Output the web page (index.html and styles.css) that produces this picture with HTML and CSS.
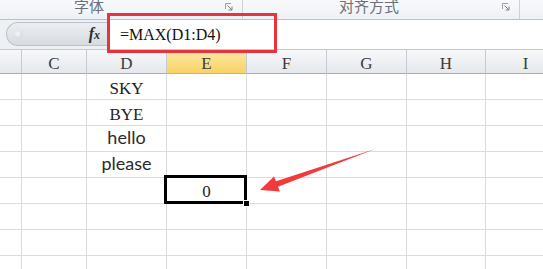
FILE: index.html
```html
<!DOCTYPE html>
<html>
<head>
<meta charset="UTF-8">
<title>MAX</title>
<link rel="stylesheet" href="styles.css">
</head>
<body>
  <div class="app">
    <div class="ribbon">
      <div class="group g1">
        <span class="glabel">字体</span>
        <svg class="launcher" width="8" height="8" viewBox="0 0 8 8"><path d="M0.5 6V0.5H6" fill="none" stroke="#9aa1aa"/><path d="M2.5 2.5L7 7M7 3.5V7H3.5" fill="none" stroke="#7b828c"/></svg>
      </div>
      <div class="group g2">
        <span class="glabel">对齐方式</span>
        <svg class="launcher" width="8" height="8" viewBox="0 0 8 8"><path d="M0.5 6V0.5H6" fill="none" stroke="#9aa1aa"/><path d="M2.5 2.5L7 7M7 3.5V7H3.5" fill="none" stroke="#7b828c"/></svg>
      </div>
      <div class="group g3"></div>
    </div>

    <div class="fbar">
      <div class="namebox">
        <span class="knob"></span>
        <span class="fx"><i>f</i><i class="fx-x">x</i></span>
      </div>
      <div class="finput">=MAX(D1:D4)</div>
    </div>

    <div class="sheet">
      <div class="hd"></div>
      <div class="hd">C</div>
      <div class="hd">D</div>
      <div class="hd hd-sel">E</div>
      <div class="hd">F</div>
      <div class="hd">G</div>
      <div class="hd">H</div>
      <div class="hd">I</div>

      <div class="cell"></div><div class="cell"></div><div class="cell serif">SKY</div><div class="cell"></div><div class="cell"></div><div class="cell"></div><div class="cell"></div><div class="cell"></div>
      <div class="cell"></div><div class="cell"></div><div class="cell serif">BYE</div><div class="cell"></div><div class="cell"></div><div class="cell"></div><div class="cell"></div><div class="cell"></div>
      <div class="cell"></div><div class="cell"></div><div class="cell sans">hello</div><div class="cell"></div><div class="cell"></div><div class="cell"></div><div class="cell"></div><div class="cell"></div>
      <div class="cell"></div><div class="cell"></div><div class="cell sans">please</div><div class="cell"></div><div class="cell"></div><div class="cell"></div><div class="cell"></div><div class="cell"></div>
      <div class="cell"></div><div class="cell"></div><div class="cell"></div><div class="cell num">0</div><div class="cell"></div><div class="cell"></div><div class="cell"></div><div class="cell"></div>
      <div class="cell"></div><div class="cell"></div><div class="cell"></div><div class="cell"></div><div class="cell"></div><div class="cell"></div><div class="cell"></div><div class="cell"></div>
      <div class="cell"></div><div class="cell"></div><div class="cell"></div><div class="cell"></div><div class="cell"></div><div class="cell"></div><div class="cell"></div><div class="cell"></div>
      <div class="cell"></div><div class="cell"></div><div class="cell"></div><div class="cell"></div><div class="cell"></div><div class="cell"></div><div class="cell"></div><div class="cell"></div>
    </div>

    <!-- overlays -->
    <div class="redbox"></div>
    <div class="selbox"><span class="handle"></span></div>
    <svg class="arrow" width="543" height="269" viewBox="0 0 543 269">
      <polygon points="260,190 274,176.5 276,181.2 375,149 278,186.8 280,191.5" fill="#f03a3c"/>
    </svg>
  </div>
</body>
</html>
```

FILE: styles.css
```css
/* General Styles */
body {
    margin: 0;
    overflow: hidden;
    background: #ffffff;
    font-family: 'Liberation Serif', serif;
    color: #222222;
}

.app {
    position: relative;
    width: 543px;
    height: 269px;
    overflow: hidden;
}

/* ribbon group labels */
.ribbon {
    display: flex;
    height: 19px;
    background: linear-gradient(#f8f9fb, #eef1f5);
    border-bottom: 1px solid #b9c0c9;
}

.group {
    display: flex;
    align-items: flex-start;
    box-sizing: border-box;
    border-right: 1px solid #cdd2d9;
}

.g1 { width: 243px; }
.g1 .glabel { width: 178px; }
.g2 { width: 277px; }
.g2 .glabel { width: 252px; }
.g3 { flex: 1; border-right: none; }

.glabel {
    font-family: 'Noto Sans CJK SC', sans-serif;
    font-size: 15px;
    line-height: 15px;
    margin-top: -2px;
    text-align: center;
    color: #6a7079;
}

.launcher {
    margin: 3px 9px 0 auto;
}

/* formula bar */
.fbar {
    display: flex;
    height: 29px;
    background: #eef1f4;
    border-bottom: 1px solid #c4c9d0;
}

.namebox {
    display: flex;
    align-items: center;
    width: 101px;
    margin: 2px 0 3px 6px;
    box-sizing: border-box;
    border: 1px solid #bcc2ca;
    border-right: none;
    border-radius: 12px 0 0 12px;
    background: linear-gradient(#eceef1, #d8dce1);
}

.knob {
    width: 9px;
    height: 9px;
    margin-left: 7px;
    border-radius: 50%;
    background: radial-gradient(circle at 40% 40%, #f6f7f8, #c9ced4);
}

.fx {
    margin: 0 7px 0 auto;
    font-size: 16px;
    font-weight: bold;
    color: #2d2d2d;
}

.fx-x {
    font-size: 12px;
}

.finput {
    flex: 1;
    padding-left: 13px;
    background: #ffffff;
    font-size: 16px;
    line-height: 29px;
    color: #111111;
}

/* sheet grid */
.sheet {
    display: grid;
    grid-template-columns: 22px 65px 80px 80px 80px 80px 79px 80px;
    grid-template-rows: 24px repeat(8, 26px);
}

.hd {
    box-sizing: border-box;
    background: linear-gradient(#f7f8fa, #e5e8ec);
    border-right: 1px solid #c6cbd2;
    border-bottom: 1px solid #a7adb5;
    text-align: center;
    font-size: 17px;
    line-height: 27px;
    color: #3a3a3a;
}

.hd-sel {
    background: linear-gradient(#fdeaa6, #f8d365);
    border-bottom-color: #e2b04a;
}

.cell {
    display: flex;
    align-items: flex-end;
    justify-content: center;
    box-sizing: border-box;
    border-right: 1px solid #dadcde;
    border-bottom: 1px solid #dadcde;
    line-height: 1;
}

.serif {
    font-size: 17px;
    padding-bottom: 2px;
}

.sans {
    font-family: 'Lato', sans-serif;
    font-size: 18px;
    padding-bottom: 5px;
    color: #2a2a2a;
}

.num {
    font-size: 17px;
    padding-bottom: 3px;
}

/* overlays */
.redbox {
    position: absolute;
    left: 107px;
    top: 13px;
    width: 164px;
    height: 34px;
    border: 3px solid #e5343c;
}

.selbox {
    position: absolute;
    left: 164px;
    top: 175px;
    width: 77px;
    height: 23px;
    border: 3px solid #000000;
}

.handle {
    position: absolute;
    right: -6px;
    bottom: -6px;
    width: 5px;
    height: 5px;
    background: #000000;
    border: 1px solid #ffffff;
}

.arrow {
    position: absolute;
    left: 0;
    top: 0;
}
```
